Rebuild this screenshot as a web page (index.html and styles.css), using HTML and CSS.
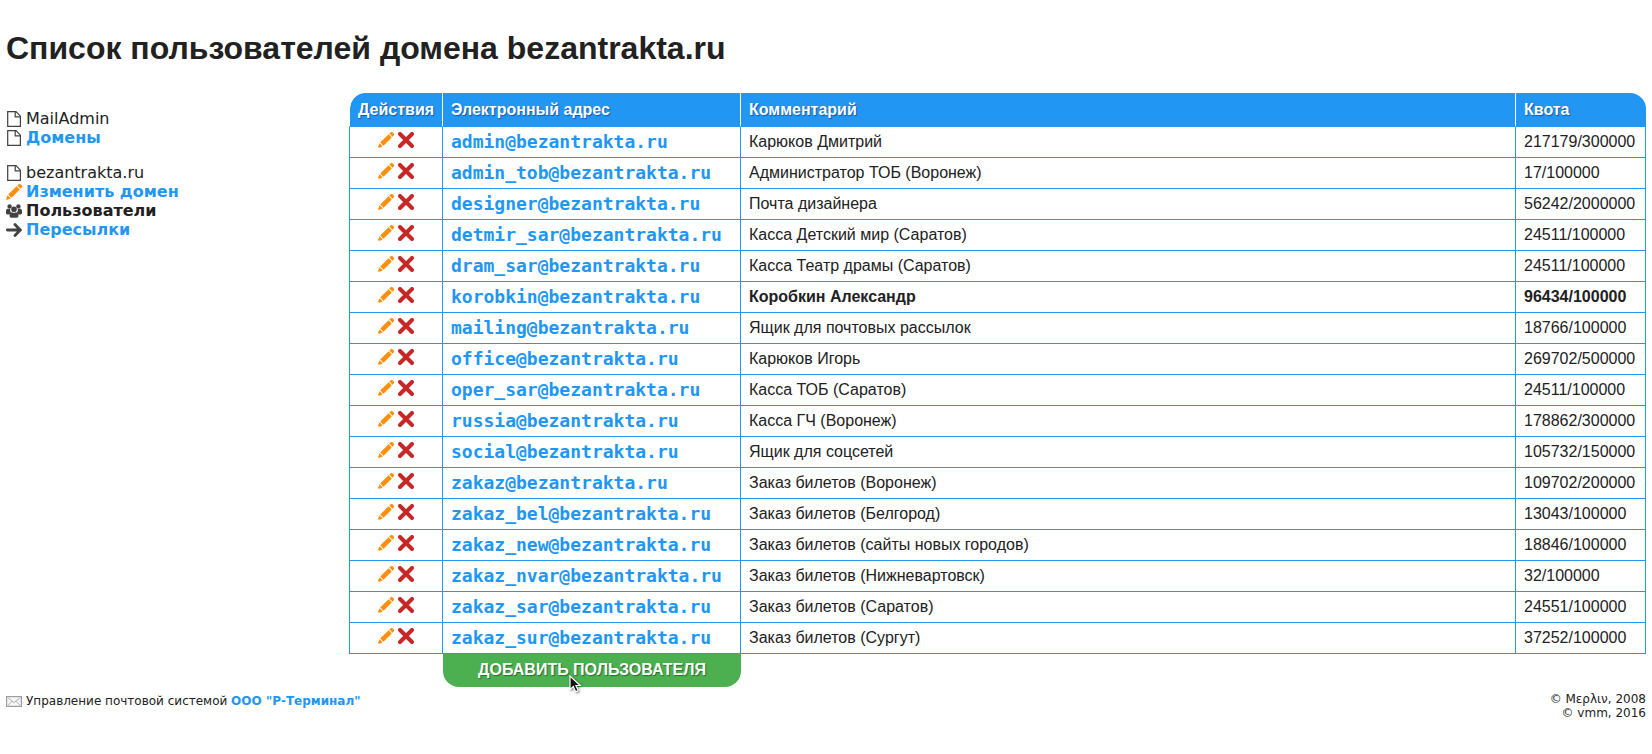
FILE: index.html
```html
<!DOCTYPE html>
<html lang="ru">
<head>
<meta charset="utf-8">
<title>Список пользователей домена bezantrakta.ru</title>
<link rel="stylesheet" href="styles.css">
</head>
<body>
<svg class="sprite" aria-hidden="true">
  <symbol id="i-page" viewBox="0 0 16 16"><path d="M1.7.6H10l4.4 4.6v10.2H1.7z" fill="#fff" stroke="#424242" stroke-width="1.2"/><path d="M9.2.8v5h5.2" fill="none" stroke="#424242" stroke-width="1.2"/></symbol>
  <symbol id="i-pencil" viewBox="0 0 16 16"><path d="M12.4.5a1.8 1.8 0 0 1 2.5.1l.6.7a1.8 1.8 0 0 1 0 2.4l-1 1.1L11.300 1.600zM10.600 2.300l3.200 3.200-8.300 8.300-3.300-3.300zM1.500 11.300l3.300 3.300-3.400 1.200a1 1 0 0 1-1.200-1.200z" fill="#ff8f0a"/></symbol>
  <symbol id="i-cross" viewBox="0 0 16 16"><path d="M2 2l12 12M14 2L2 14" fill="none" stroke="#c62828" stroke-width="4" stroke-linecap="round"/></symbol>
  <symbol id="i-users" viewBox="0 0 16 16"><g fill="#424242"><circle cx="3.600" cy="3.400" r="2.200"/><circle cx="12.400" cy="3.400" r="2.200"/><path d="M0 10V7.800C0 6.300 1 5.700 2.200 5.700h2c-.3 1.800.2 2.900 1 3.700-1 .5-1.400 1.200-1.700 2H1.300C.5 11.400 0 11 0 10zM16 10V7.800c0-1.500-1-2.100-2.200-2.100h-2c.3 1.800-.2 2.900-1 3.700 1 .5 1.400 1.200 1.700 2h2.200c.8 0 1.300-.4 1.300-1.400z"/><circle cx="8" cy="6.200" r="2.800"/><path d="M3.500 12.500c0-2 1.200-3.200 2.700-3.200.5.500 1.100.7 1.800.7s1.300-.2 1.800-.7c1.500 0 2.700 1.200 2.700 3.200 0 1.500-.7 2.200-2 2.200h-5c-1.300 0-2-.7-2-2.200z"/></g></symbol>
  <symbol id="i-arrow" viewBox="0 0 16 16"><path d="M1.400 8h12.600M9 2.600L14.300 8 9 13.400" fill="none" stroke="#424242" stroke-width="2.800" stroke-linecap="round"/></symbol>
  <symbol id="i-mail" viewBox="0 0 16 11"><path d="M.6.600h14.800v9.800H.600z" fill="#f8f8f8" stroke="#9e9e9e" stroke-width="1.200"/><path d="M2 2l6 4.500L14 2M2 9.200l4.200-4M14 9.200l-4.200-4" fill="none" stroke="#b0b0b0"/></symbol>
</svg>

<h1 class="title">Список пользователей домена bezantrakta.ru</h1>

<div class="layout">
  <nav class="menu">
    <ul class="menu-group">
      <li><svg class="icon"><use href="#i-page"/></svg><span>MailAdmin</span></li>
      <li><svg class="icon"><use href="#i-page"/></svg><a href="#">Домены</a></li>
    </ul>
    <ul class="menu-group">
      <li><svg class="icon"><use href="#i-page"/></svg><span>bezantrakta.ru</span></li>
      <li><svg class="icon"><use href="#i-pencil"/></svg><a href="#">Изменить домен</a></li>
      <li><svg class="icon"><use href="#i-users"/></svg><strong>Пользователи</strong></li>
      <li><svg class="icon"><use href="#i-arrow"/></svg><a href="#">Пересылки</a></li>
    </ul>
  </nav>

  <main class="content">
    <table class="users">
      <colgroup><col class="col-actions"><col class="col-email"><col><col class="col-quota"></colgroup>
      <thead>
        <tr><th>Действия</th><th>Электронный адрес</th><th>Комментарий</th><th>Квота</th></tr>
      </thead>
      <tbody id="rows"></tbody>
      <tfoot>
        <tr><td></td><td><a class="add" href="#">ДОБАВИТЬ ПОЛЬЗОВАТЕЛЯ<svg class="cursor" viewBox="0 0 14 20" aria-hidden="true"><path d="M1 1v13.500l3.300-3 2.300 5.200 2.600-1.100-2.300-5.100h4.300z" fill="#111" stroke="#fff" stroke-width="1.200"/></svg></a></td><td></td><td></td></tr>
      </tfoot>
    </table>
  </main>
</div>

<footer class="footer">
  <div class="about"><svg class="icon-mail"><use href="#i-mail"/></svg><span>Управление почтовой системой <a href="#">ООО "Р-Терминал"</a></span></div>
  <div class="copy">© Мερλιν, 2008<br>© vmm, 2016</div>
</footer>
<script src="users.js"></script>
</body>
</html>
```

FILE: styles.css
```css
body {
  margin: 0;
  padding: 30px 6px 0;
  background: #fff;
  color: #212121;
  font: 16px/19px "DejaVu Sans", sans-serif;
}
a { color: #2196f3; font-weight: bold; text-decoration: none; }
.sprite { display: none; }
.title {
  margin: 0 0 26px;
  font: bold 32px/37px "Liberation Sans", Arial, sans-serif;
}
.layout { display: flex; align-items: flex-start; }
.menu { flex: none; width: 343px; padding-top: 16px; }
.menu-group { list-style: none; margin: 0 0 16px; padding: 0; }
.menu-group li { display: flex; align-items: center; gap: 4px; }
.icon { flex: none; width: 16px; height: 16px; }
.content { flex: 1; min-width: 0; }

.users {
  width: 100%;
  table-layout: fixed;
  border-collapse: separate;
  border-spacing: 0;
  font: 16px/18px "Liberation Sans", Arial, sans-serif;
}
.col-actions { width: 94px; }
.col-email { width: 298px; }
.col-quota { width: 130px; }
.users th {
  height: 33px;
  padding: 0 8px;
  background: #2196f3;
  background-clip: padding-box;
  border-right: 1px solid #fff;
  border-bottom: 1px solid #2196f3;
  color: #fff;
  text-align: left;
  text-shadow: 1px 1px 1px #1a56ac;
}
.users th:first-child { border-left: 1px solid #fff; border-top-left-radius: 16px; }
.users th:last-child { border-right: 0; border-top-right-radius: 16px; }
.users tbody td {
  height: 30px;
  padding: 0 8px;
  border-right: 1px solid #2196f3;
  border-bottom: 1px solid #2196f3;
}
.users tbody td:first-child { border-left: 1px solid #2196f3; }
.users tfoot td { padding: 0; }
.over { font-weight: bold; }
.actions { display: flex; justify-content: center; gap: 4px; padding-bottom: 4px; }
.actions a { display: block; height: 16px; }
.actions svg { display: block; }
.email { font: bold 18px/22px "DejaVu Sans Mono", monospace; }
.add {
  display: block;
  position: relative;
  padding: 7px 0 8px;
  border-radius: 0 0 16px 16px;
  background: #4caf50;
  color: #fff;
  text-align: center;
  text-shadow: 1px 1px 1px #2a6e2e;
}
.cursor {
  position: absolute;
  left: 126px;
  top: 21px;
  width: 14px;
  height: 20px;
  filter: drop-shadow(1px 1px 1px rgba(0, 0, 0, .5));
}

.footer {
  display: flex;
  justify-content: space-between;
  padding-top: 5px;
  font-size: 12px;
  line-height: 14px;
}
.about { display: flex; align-items: center; align-self: flex-start; gap: 4px; padding-top: 2px; }
.icon-mail { width: 16px; height: 11px; }
.copy { text-align: right; }
```

FILE: users.js
```js
const users = [
  ["admin", "Карюков Дмитрий", "217179/300000"],
  ["admin_tob", "Администратор ТОБ (Воронеж)", "17/100000"],
  ["designer", "Почта дизайнера", "56242/2000000"],
  ["detmir_sar", "Касса Детский мир (Саратов)", "24511/100000"],
  ["dram_sar", "Касса Театр драмы (Саратов)", "24511/100000"],
  ["korobkin", "Коробкин Александр", "96434/100000"],
  ["mailing", "Ящик для почтовых рассылок", "18766/100000"],
  ["office", "Карюков Игорь", "269702/500000"],
  ["oper_sar", "Касса ТОБ (Саратов)", "24511/100000"],
  ["russia", "Касса ГЧ (Воронеж)", "178862/300000"],
  ["social", "Ящик для соцсетей", "105732/150000"],
  ["zakaz", "Заказ билетов (Воронеж)", "109702/200000"],
  ["zakaz_bel", "Заказ билетов (Белгород)", "13043/100000"],
  ["zakaz_new", "Заказ билетов (сайты новых городов)", "18846/100000"],
  ["zakaz_nvar", "Заказ билетов (Нижневартовск)", "32/100000"],
  ["zakaz_sar", "Заказ билетов (Саратов)", "24551/100000"],
  ["zakaz_sur", "Заказ билетов (Сургут)", "37252/100000"]
];

// Mailboxes filled above 90% of the quota are shown in bold.
document.getElementById("rows").innerHTML = users.map(([name, comment, quota]) => {
  const [used, limit] = quota.split("/").map(Number);
  return `<tr class="${used / limit > 0.9 ? "over" : ""}">
    <td><div class="actions">
      <a href="#" aria-label="Изменить"><svg class="icon"><use href="#i-pencil"/></svg></a>
      <a href="#" aria-label="Удалить"><svg class="icon"><use href="#i-cross"/></svg></a>
    </div></td>
    <td><a class="email" href="#">${name}@bezantrakta.ru</a></td>
    <td>${comment}</td>
    <td>${quota}</td>
  </tr>`;
}).join("");
```
